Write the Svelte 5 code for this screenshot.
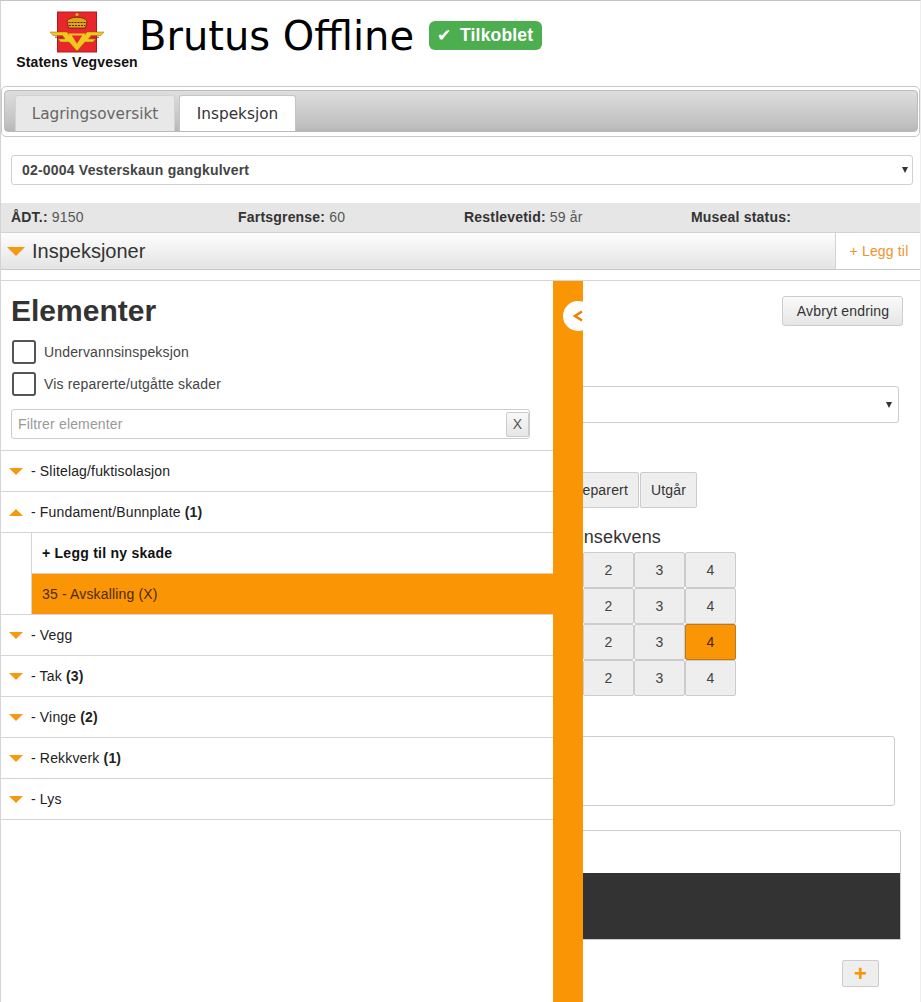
<script>
    const tabs = [
        { label: "Lagringsoversikt", active: false },
        { label: "Inspeksjon", active: true },
    ];
    const info = [
        { key: "ÅDT.:", value: "9150" },
        { key: "Fartsgrense:", value: "60" },
        { key: "Restlevetid:", value: "59 år" },
        { key: "Museal status:", value: "" },
    ];
    const elements = [
        { name: "Slitelag/fuktisolasjon" },
        { name: "Fundament/Bunnplate", count: 1, open: true },
        { name: "Vegg" },
        { name: "Tak", count: 3 },
        { name: "Vinge", count: 2 },
        { name: "Rekkverk", count: 1 },
        { name: "Lys" },
    ];
    const rows = [0, 1, 2, 3];
    const cols = [0, 1, 2, 3, 4];
</script>

<div class="page">
    <header class="top">
        <div class="brand">
            <svg class="logo" viewBox="0 0 56 42" width="56" height="42" aria-hidden="true">
                <rect x="8.5" y="1" width="39" height="40" fill="#e8262c" stroke="#a81c20" />
                <!-- crown -->
                <circle cx="28" cy="3.500" r="1.600" fill="#e9b91f" />
                <path d="M18 10c3-5 17-5 20 0l-1.500 7h-17z" fill="#d9a81c" stroke="#6e1a10" stroke-width=".8" />
                <path d="M19.500 11.500h17M20 14.500h16" stroke="#6e1a10" stroke-width="1" stroke-dasharray="2 1" />
                <!-- wings -->
                <path d="M1 21h17l2 3h16l2-3h17l-3 3.500H42l-2.500 3.500h7l-2.500 3H36l-8 9-8-9h-8.500L9 28h7l-2.500-3.500H4z" fill="#f2c81e" stroke="#8a6a10" stroke-width=".5" />
                <path d="M6 26.200h8M42 26.200h8" stroke="#a8271c" stroke-width="1" />
                <!-- triangle -->
                <path d="M21 23.500h14l-7 11z" fill="#e8262c" stroke="#f2c81e" stroke-width="2" />
            </svg>
            <span class="brand-name">Statens Vegvesen</span>
        </div>
        <h1>Brutus Offline</h1>
        <span class="status"><span class="tick">✔</span>Tilkoblet</span>
    </header>

    <nav class="tabs">
        <div class="tabs-inner">
            {#each tabs as tab}
                <button class="tab" class:active={tab.active}>{tab.label}</button>
            {/each}
        </div>
    </nav>

    <div class="bridge-select">
        <span>02-0004 Vesterskaun gangkulvert</span>
        <i class="arrow"></i>
    </div>

    <div class="info">
        {#each info as item}
            <div><b>{item.key}</b> {item.value}</div>
        {/each}
    </div>

    <div class="section-bar">
        <div class="section-title">
            <i class="caret big"></i>
            <span>Inspeksjoner</span>
        </div>
        <button class="add">+ Legg til</button>
    </div>

    <div class="stage">
        <div class="form">
            <div class="form-head">
                <button class="btn">Avbryt endring</button>
            </div>
            <div class="form-select"><i class="arrow"></i></div>
            <div class="state-btns">
                <button class="square">Reparert</button>
                <button class="square">Utgår</button>
            </div>
            <h3>Konsekvens</h3>
            <div class="matrix">
                {#each rows as r}
                    {#each cols as c}
                        <button class="cell" class:picked={r === 2 && c === 4}>{c}</button>
                    {/each}
                {/each}
            </div>
            <div class="textarea"></div>
            <div class="photo">
                <div class="photo-head"></div>
                <div class="photo-body"></div>
            </div>
            <div class="plus-row">
                <button class="plus">+</button>
            </div>
        </div>

        <aside class="panel">
            <div class="list-side">
                <h2>Elementer</h2>
                <label class="check"><i class="box"></i>Undervannsinspeksjon</label>
                <label class="check"><i class="box"></i>Vis reparerte/utgåtte skader</label>
                <div class="filter">
                    <span>Filtrer elementer</span>
                    <button class="clear">X</button>
                </div>
                <ul>
                    {#each elements as el}
                        <li class="row">
                            <i class="caret" class:up={el.open}></i>
                            <span>- {el.name}{#if el.count}&nbsp;<b>({el.count})</b>{/if}</span>
                        </li>
                        {#if el.open}
                            <li class="sub">
                                <div class="sub-item new">+ Legg til ny skade</div>
                                <div class="sub-item current">35 - Avskalling (X)</div>
                            </li>
                        {/if}
                    {/each}
                </ul>
            </div>
            <div class="handle">
                <div class="knob">
                    <svg viewBox="0 0 10 12" width="10" height="12" aria-hidden="true">
                        <path d="M9 1.500 2 6l7 4.500" fill="none" stroke="#ee7f00" stroke-width="2.400" />
                    </svg>
                </div>
            </div>
        </aside>
    </div>
</div>

<style>
    :global(body) {
        background: #fff;
    }

    .page {
        height: 1002px;
        overflow: hidden;
        box-sizing: border-box;
        border-top: 1px solid #c4c4c4;
        border-left: 1px solid #d4d4d4;
        border-right: 1px solid #eee;
        font-family: "Liberation Sans", Arial, sans-serif;
        font-size: 14px;
        letter-spacing: 0.16px;
        color: #333;
    }

    button {
        font-family: "Liberation Sans", Arial, sans-serif;
        letter-spacing: 0.16px;
    }

    .top {
        display: flex;
        align-items: flex-start;
        height: 84px;
        padding-left: 15px;
    }

    .brand {
        display: flex;
        flex-direction: column;
        align-items: center;
        width: 122px;
        padding-top: 10px;
    }

    .logo {
        display: block;
    }

    .brand-name {
        margin-top: 1px;
        font-size: 14px;
        font-weight: 700;
        line-height: 17px;
        white-space: nowrap;
        color: #111;
    }

    h1 {
        margin: 8px 0 0 1px;
        font-family: "DejaVu Sans", Verdana, sans-serif;
        font-size: 40px;
        font-weight: 400;
        line-height: 54px;
        letter-spacing: 0;
        color: #000;
    }

    .status {
        display: flex;
        margin: 20px 0 0 15px;
        padding: 0 9px 0 8px;
        height: 29px;
        line-height: 28px;
        background: #4cae4f;
        border-radius: 6px;
        color: #fff;
        font-size: 17.500px;
        font-weight: 700;
        white-space: nowrap;
    }

    .tick {
        width: 23px;
        font-family: "DejaVu Sans", sans-serif;
        font-size: 17px;
    }

    .tabs {
        box-sizing: border-box;
        height: 51px;
        margin-top: 1px;
        padding: 3px 1px 4px 2px;
        border: 1px solid #c8c8c8;
        border-radius: 5px;
    }

    .tabs-inner {
        display: flex;
        align-items: flex-end;
        gap: 4px;
        box-sizing: border-box;
        height: 42px;
        padding-left: 10px;
        border: 1px solid #bbb;
        border-radius: 4px;
        background: linear-gradient(#dedede, #c0c0c0 85%, #b6b6b6);
    }

    .tab {
        height: 36px;
        width: 160px;
        padding: 0;
        border: 1px solid #d3d3d3;
        border-bottom: 0;
        border-radius: 3px 3px 0 0;
        background: #e8e8e8;
        font-family: "DejaVu Sans", Verdana, sans-serif;
        font-size: 15.300px;
        letter-spacing: 0;
        color: #666;
    }

    .tab.active {
        width: 117px;
        background: #fff;
        color: #333;
        border-color: #c4c4c4;
    }

    .bridge-select {
        display: flex;
        align-items: center;
        justify-content: space-between;
        box-sizing: border-box;
        height: 30px;
        margin: 18px 7px 0 10px;
        padding: 0 4px 0 10px;
        border: 1px solid #d0d0d0;
        border-radius: 3px;
        font-weight: 700;
        letter-spacing: 0.2px;
        color: #444;
    }

    .arrow {
        display: block;
        width: 0;
        height: 0;
        border-left: 3px solid transparent;
        border-right: 3px solid transparent;
        border-top: 6px solid #333;
    }

    .info {
        display: grid;
        grid-template-columns: 227px 226px 227px 1fr;
        align-items: center;
        box-sizing: border-box;
        height: 30px;
        margin-top: 18px;
        padding: 0 0 2px 10px;
        background: #e6e6e6;
        border-bottom: 1px solid #d2d2d2;
        color: #555;
    }

    .info b {
        color: #333;
        letter-spacing: 0.2px;
    }

    .section-bar {
        display: flex;
        height: 37px;
        box-sizing: border-box;
        border-bottom: 1px solid #c8c8c8;
    }

    .section-title {
        flex: 1;
        display: flex;
        align-items: center;
        gap: 7px;
        padding-left: 6px;
        font-size: 20px;
        letter-spacing: 0;
        background: linear-gradient(#fdfdfd, #e4e4e4);
    }

    .add {
        width: 85px;
        padding: 0 0 0 2px;
        border: 0;
        border-left: 1px solid #d4d4d4;
        background: #fff;
        color: #f0932b;
        font-size: 14px;
    }

    .caret {
        flex: none;
        display: block;
        width: 0;
        height: 0;
        border-left: 7px solid transparent;
        border-right: 7px solid transparent;
        border-top: 7px solid #f7980f;
    }

    .caret.big {
        border-left-width: 9px;
        border-right-width: 9px;
        border-top-width: 9px;
    }

    .caret.up {
        border-top: 0;
        border-bottom: 7px solid #f7980f;
    }

    .stage {
        position: relative;
        height: 721px;
        margin-top: 10px;
        border-top: 1px solid #d4d4d4;
        overflow: hidden;
    }

    .form {
        box-sizing: border-box;
        height: 100%;
        padding: 15px 20px 0 0;
    }

    .form-head {
        display: flex;
        justify-content: flex-end;
        height: 30px;
        margin-right: -3px;
    }

    .btn {
        width: 121px;
        height: 30px;
        padding: 0 0 0 1px;
        border: 1px solid #ccc;
        border-radius: 3px;
        background: linear-gradient(#fafafa, #e6e6e6);
        color: #333;
        font-size: 14px;
    }

    .form-select {
        display: flex;
        align-items: center;
        justify-content: flex-end;
        box-sizing: border-box;
        height: 37px;
        margin: 60px 1px 0 0;
        padding-right: 6px;
        border: 1px solid #ccc;
        border-radius: 3px;
    }

    .state-btns {
        display: flex;
        justify-content: flex-end;
        gap: 1px;
        width: 696px;
        margin-top: 49px;
    }

    .square {
        height: 36px;
        padding: 0 10px;
        border: 1px solid #ccc;
        border-radius: 2px;
        background: #eee;
        color: #333;
        font-size: 14px;
    }

    h3 {
        width: 660px;
        margin: 19px 0 0;
        text-align: right;
        font-size: 18px;
        font-weight: 400;
        line-height: 21px;
    }

    .matrix {
        display: grid;
        grid-template-columns: repeat(5, 51px);
        justify-content: end;
        width: 735px;
        margin-top: 4px;
    }

    .cell {
        height: 36px;
        padding: 0;
        border: 1px solid #ccc;
        border-radius: 2px;
        background: #eee;
        color: #444;
        font-size: 14px;
    }

    .cell.picked {
        background: #fa9506;
        border-color: #bd7a1a;
        color: #4a2500;
    }

    .textarea {
        box-sizing: border-box;
        height: 70px;
        margin: 40px 5px 0 0;
        border: 1px solid #ccc;
        border-radius: 3px;
    }

    .photo {
        box-sizing: border-box;
        height: 110px;
        margin: 24px -1px 0 0;
        border: 1px solid #ccc;
        border-radius: 2px 2px 0 0;
    }

    .photo-head {
        height: 42px;
    }

    .photo-body {
        height: 66px;
        background: #333;
    }

    .plus-row {
        display: flex;
        justify-content: flex-end;
        margin: 20px 21px 0 0;
    }

    .plus {
        width: 37px;
        height: 27px;
        padding: 0;
        border: 1px solid #ccc;
        border-radius: 2px;
        background: #eee;
        color: #fa9506;
        font-size: 22px;
        font-weight: 700;
        line-height: 24px;
    }

    .panel {
        position: absolute;
        top: 0;
        left: 0;
        bottom: 0;
        width: 582px;
        display: flex;
        overflow: hidden;
        background: #fff;
    }

    .list-side {
        width: 552px;
    }

    h2 {
        margin: 12px 0 11px 10px;
        font-size: 30px;
        line-height: 36px;
        font-weight: 700;
        letter-spacing: 0;
        color: #333;
    }

    .check {
        display: flex;
        align-items: center;
        height: 24px;
        margin: 0 0 8px 11px;
        color: #444;
    }

    .box {
        box-sizing: border-box;
        width: 24px;
        height: 24px;
        margin-right: 8px;
        border: 2px solid #555;
        border-radius: 3px;
    }

    .filter {
        display: flex;
        align-items: center;
        justify-content: space-between;
        box-sizing: border-box;
        height: 30px;
        margin: 13px 23px 11px 10px;
        padding: 0 0 0 6px;
        border: 1px solid #ccc;
        border-radius: 3px;
        color: #999;
    }

    .clear {
        width: 23px;
        height: 25px;
        padding: 0;
        border: 1px solid #ccc;
        border-radius: 2px;
        background: linear-gradient(#f8f8f8, #e6e6e6);
        color: #555;
        font-size: 14px;
    }

    ul {
        margin: 0;
        padding: 0;
        list-style: none;
        border-top: 1px solid #d4d4d4;
    }

    .row {
        display: flex;
        align-items: center;
        gap: 8px;
        box-sizing: border-box;
        height: 41px;
        padding-left: 8px;
        border-bottom: 1px solid #d4d4d4;
        color: #222;
    }

    .row b {
        color: #222;
    }

    .sub {
        box-sizing: border-box;
        height: 82px;
        padding-left: 30px;
        border-bottom: 1px solid #d4d4d4;
    }

    .sub-item {
        box-sizing: border-box;
        height: 41px;
        line-height: 40px;
        padding-left: 10px;
        border-left: 1px solid #d4d4d4;
    }

    .new {
        font-weight: 700;
        letter-spacing: 0.25px;
        color: #111;
        border-bottom: 1px solid #e8cfa8;
    }

    .sub-item.current {
        height: 40px;
        background: #fa9506;
        color: #4f2a00;
    }

    .handle {
        position: relative;
        width: 30px;
        background: #fa9506;
    }

    .knob {
        position: absolute;
        top: 20px;
        left: 10px;
        display: flex;
        align-items: center;
        justify-content: flex-end;
        box-sizing: border-box;
        width: 30px;
        height: 30px;
        padding-right: 10px;
        border-radius: 50%;
        background: #fff;
    }

    .knob svg {
        display: block;
        flex: none;
    }
</style>
